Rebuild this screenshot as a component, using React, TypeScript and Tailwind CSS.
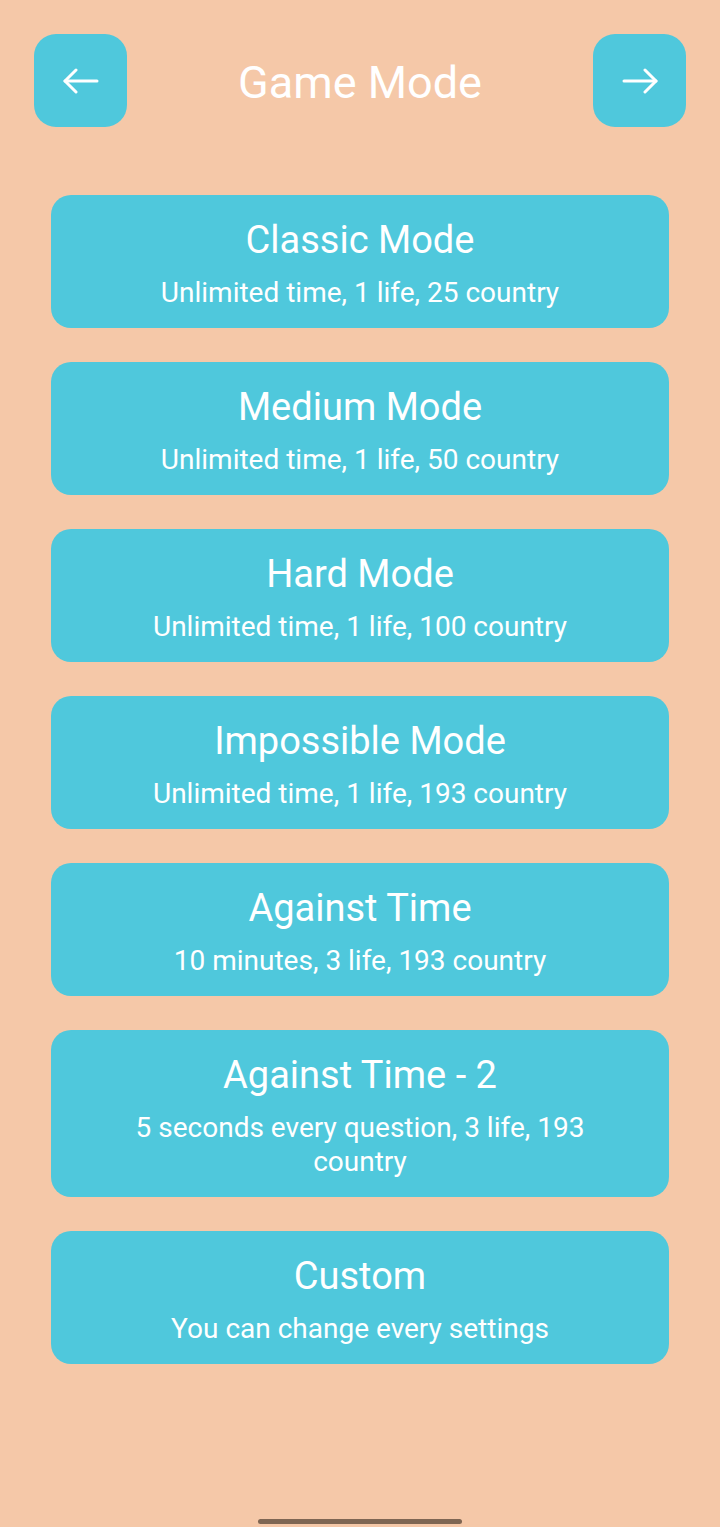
const modes = [
  { title: "Classic Mode", desc: "Unlimited time, 1 life, 25 country" },
  { title: "Medium Mode", desc: "Unlimited time, 1 life, 50 country" },
  { title: "Hard Mode", desc: "Unlimited time, 1 life, 100 country" },
  { title: "Impossible Mode", desc: "Unlimited time, 1 life, 193 country" },
  { title: "Against Time", desc: "10 minutes, 3 life, 193 country" },
  { title: "Against Time - 2", desc: "5 seconds every question, 3 life, 193 country" },
  { title: "Custom", desc: "You can change every settings" },
];

function ArrowButton({ dir }: { dir: "left" | "right" }) {
  return (
    <button className="w-[93px] h-[93px] rounded-[22px] bg-[#4fc8dc] flex items-center justify-center">
      <svg width="36" height="26" viewBox="0 0 36 26" fill="none" stroke="white" strokeWidth="3" strokeLinecap="round" strokeLinejoin="round">
        {dir === "left" ? (
          <>
            <line x1="2" y1="13" x2="34" y2="13" />
            <polyline points="13,2 2,13 13,24" />
          </>
        ) : (
          <>
            <line x1="2" y1="13" x2="34" y2="13" />
            <polyline points="23,2 34,13 23,24" />
          </>
        )}
      </svg>
    </button>
  );
}

export default function App() {
  return (
    <div
      className="w-[720px] h-[1527px] bg-[#f5c8a8] relative text-white"
      style={{ fontFamily: "Roboto, 'Noto Sans', sans-serif" }}
    >
      {/* Header */}
      <div className="flex items-center justify-between px-[34px] pt-[34px]">
        <ArrowButton dir="left" />
        <h1 className="text-[45px] leading-none font-normal mt-[3px]">Game Mode</h1>
        <ArrowButton dir="right" />
      </div>

      {/* Mode list */}
      <div className="flex flex-col gap-[34px] px-[51px] pt-[68px]">
        {modes.map((m) => (
          <button
            key={m.title}
            className="w-full min-h-[133px] rounded-[20px] bg-[#4fc8dc] flex flex-col items-center justify-center px-[80px] pt-[23px] pb-[18px] text-center"
          >
            <span className="text-[38px] leading-[44px]">{m.title}</span>
            <span className="text-[28px] leading-[34px] mt-[14px]">{m.desc}</span>
          </button>
        ))}
      </div>

      {/* Gesture bar */}
      <div className="absolute bottom-[3px] left-[258px] w-[204px] h-[5px] rounded-full bg-[#7f6653]" />
    </div>
  );
}
